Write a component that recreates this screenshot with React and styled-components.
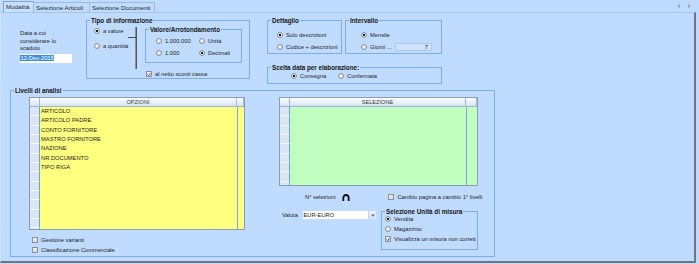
import React from 'react'
import styled, { createGlobalStyle } from 'styled-components'

const Global = createGlobalStyle`
  html, body {
    margin: 0;
    padding: 0;
    background: #bfdbff;
  }
  body {
    font-family: "Liberation Sans", Arial, sans-serif;
    font-size: 5.75px;
    color: #1e1e1e;
  }
  * { box-sizing: border-box; }
`

const Window = styled.div`
  width: 699px;
  height: 264px;
  overflow: hidden;
  background: #bfdbff;
  display: flex;
  flex-direction: column;
`

const TabStrip = styled.div`
  height: 12px;
  display: flex;
  align-items: flex-end;
  padding-left: 3px;
`

const Tab = styled.div`
  width: ${p => p.$w}px;
  height: ${p => (p.$active ? 11 : 10)}px;
  border: 1px solid ${p => (p.$active ? '#7fa3d4' : '#9dbbe2')};
  border-bottom: none;
  margin-right: -1px;
  padding-left: 2px;
  font-size: 6.2px;
  line-height: ${p => (p.$active ? 10 : 9)}px;
  color: #2a2a2a;
  background: ${p => (p.$active ? '#c6e0ff' : '#bfdbff')};
  white-space: nowrap;
`

const Scroller = styled.svg`
  margin-left: auto;
  margin-right: 7px;
  align-self: center;
`

const Panel = styled.div`
  width: 696px;
  height: 251px;
  border-top: 1px solid #a4c4ee;
  border-left: 1px solid #cfe3ff;
  border-right: 2px solid #6f7680;
  border-bottom: 2px solid #6f7680;
`

const TopRow = styled.div`
  display: flex;
  align-items: flex-start;
  height: 71px;
  padding-top: 4px;
`

const DateBlock = styled.div`
  width: 66px;
  margin-left: 19px;
  padding-top: 13px;
  line-height: 7.5px;
`

const DateInput = styled.div`
  width: 52px;
  height: 9px;
  margin-top: 1px;
  background: #fff;
  line-height: 9px;
  white-space: nowrap;
`

const Selected = styled.span`
  background: #3d8de0;
  color: #fff;
  padding: 0 0.5px;
`

const Group = styled.fieldset`
  margin: 0 0 0 ${p => p.$ml || 0}px;
  padding: 0;
  min-width: 0;
  width: ${p => p.$w}px;
  height: ${p => p.$h}px;
  border: 1px solid #7eacee;
  flex: none;
`

const Legend = styled.legend`
  margin-left: 3px;
  padding: 0 1px;
  font-weight: bold;
  font-size: 6.3px;
  line-height: 7px;
  color: #151515;
  white-space: nowrap;
`

const Col = styled.div`
  display: flex;
  flex-direction: column;
  gap: ${p => p.$gap || 0}px;
  padding: ${p => p.$pad || '0'};
  overflow: ${p => (p.$clip ? 'hidden' : 'visible')};
`

const Row = styled.div`
  display: flex;
  align-items: flex-start;
  gap: ${p => p.$gap || 0}px;
  padding: ${p => p.$pad || '0'};
`

const Option = styled.div`
  display: flex;
  align-items: center;
  gap: 3px;
  height: 8px;
  width: ${p => (p.$w ? `${p.$w}px` : 'auto')};
  white-space: nowrap;
  flex: none;
`

const Radio = styled.span`
  width: 6px;
  height: 6px;
  border-radius: 50%;
  border: 1px solid #8d9096;
  flex: none;
  background: ${p =>
    p.$on
      ? 'radial-gradient(circle, #1b1b1b 0 1.2px, #f6f6f6 1.6px, #d6d6d6 100%)'
      : 'radial-gradient(circle at 40% 35%, #f8f8f8, #d2d4d8)'};
`

const Box = styled.span`
  width: 6px;
  height: 6px;
  border: 1px solid #8d9096;
  background: linear-gradient(135deg, #f6f6f6, #d4d6da);
  flex: none;
  display: flex;
  align-items: center;
  justify-content: center;
`

const TipoGrid = styled.div`
  display: grid;
  grid-template-columns: 43px auto;
  row-gap: 4px;
  padding: 4px 0 0 10px;
`

const NumBox = styled.div`
  width: 37px;
  height: 8px;
  background: #cfe2fa;
  border: 1px solid #afc9ea;
  text-align: right;
  padding-right: 3px;
  line-height: 6px;
`

const LivelliBody = styled.div`
  display: grid;
  grid-template-columns: 216px 199px;
  column-gap: 34px;
  padding: 3px 0 0 18px;
`

const DataGrid = styled.div`
  height: ${p => p.$h}px;
  border: 1px solid #8c9cb4;
  background: ${p => p.$fill};
  display: flex;
  flex-direction: column;
  overflow: hidden;
`

const GridLine = styled.div`
  display: grid;
  grid-template-columns: 10px 1fr ${p => p.$extra}px;
  height: ${p => (p.$head ? 9 : 9.35)}px;
  flex: none;
  background: ${p => (p.$head ? 'linear-gradient(#fdfeff, #d7e2f1)' : 'transparent')};
  border-bottom: ${p => (p.$head ? '1px solid #9eb4d4' : 'none')};
`

const HeadCell = styled.div`
  border-right: 1px solid #a7bad6;
  text-align: center;
  line-height: 8px;
  font-size: 5.6px;
  color: #3a3a3a;
`

const RowHead = styled.div`
  background: #dbe6f4;
  border-bottom: 1px solid #f2f7fd;
  border-right: 1px solid #6c9ee2;
`

const Cell = styled.div`
  padding-left: 1px;
  line-height: 9px;
  white-space: nowrap;
  overflow: hidden;
`

const EndCell = styled.div`
  border-left: 1px solid #79a6e6;
`

const Checks = styled.div`
  display: flex;
  flex-direction: column;
  gap: 2px;
  margin: 6px 0 0 3px;
`

const InfoRow = styled.div`
  display: flex;
  align-items: center;
  height: 8px;
  margin-top: 7px;
  padding-left: 26px;
  white-space: nowrap;
`

const Arch = styled.svg`
  display: block;
  flex: none;
  margin: 0 38px 0 7px;
`

const ValutaRow = styled.div`
  display: flex;
  align-items: flex-start;
  margin-top: 7px;
  padding-left: 3px;
`

const Label = styled.div`
  width: ${p => p.$w}px;
  margin-top: 3px;
  line-height: 8px;
`

const Combo = styled.div`
  width: 73px;
  height: 8px;
  margin-top: 3px;
  background: #fff;
  display: flex;
`

const ComboText = styled.div`
  flex: 1;
  line-height: 8px;
  padding-left: 0.5px;
`

const ComboBtn = styled.div`
  width: 8px;
  background: linear-gradient(#eef3fa, #d6e0ee);
  border-left: 1px solid #c4cfdf;
  display: flex;
  align-items: center;
  justify-content: center;
`

const Tick = () => (
  <svg width="5" height="5" viewBox="0 0 5 5">
    <path d="M0.6 2.6 L2 4 L4.4 0.8" stroke="#333" strokeWidth="0.9" fill="none" />
  </svg>
)

const Opt = ({ type = 'radio', on, w, children }) => (
  <Option $w={w}>
    {type === 'radio' ? <Radio $on={on} /> : <Box>{on && <Tick />}</Box>}
    <span>{children}</span>
  </Option>
)

const Grid = ({ title, h, extra, fill, items, rows }) => (
  <DataGrid $h={h} $fill={fill}>
    <GridLine $head $extra={extra}>
      <HeadCell />
      <HeadCell>{title}</HeadCell>
      <HeadCell />
    </GridLine>
    {Array.from({ length: rows }).map((_, i) => (
      <GridLine key={i} $extra={extra}>
        <RowHead />
        <Cell>{items[i] || ''}</Cell>
        <EndCell />
      </GridLine>
    ))}
  </DataGrid>
)

const opzioni = [
  'ARTICOLO',
  'ARTICOLO PADRE',
  'CONTO FORNITORE',
  'MASTRO FORNITORE',
  'NAZIONE',
  'NR.DOCUMENTO',
  'TIPO RIGA',
]

export default function App() {
  return (
    <Window>
      <Global />
      <TabStrip>
        <Tab $w={31} $active>Modalità</Tab>
        <Tab $w={57}>Selezione Articoli</Tab>
        <Tab $w={66}>Selezione Documenti</Tab>
        <Scroller width="16" height="6" viewBox="0 0 16 6">
          <path d="M4 0.5 L1 3 L4 5.5 Z" fill="#a3adbb" />
          <path d="M12 0.5 L15 3 L12 5.5 Z" fill="#a3adbb" />
        </Scroller>
      </TabStrip>

      <Panel>
        <TopRow>
          <DateBlock>
            Data a cui<br />considerare lo<br />scaduto
            <DateInput><Selected>12-Dec-2015</Selected></DateInput>
          </DateBlock>

          <Group $w={164} $h={62}>
            <Legend>Tipo di informazione</Legend>
            <Row $pad="0 6px 0 7px">
              <Col $gap={7} $pad="3px 0 0 0" style={{ width: 34 }}>
                <Opt on>a valore</Opt>
                <Opt>a quantità</Opt>
              </Col>
              <svg width="9" height="45" viewBox="0 0 9 45">
                <path d="M0 13.5 H8" stroke="#4a4a4a" strokeWidth="1" />
                <path d="M8.2 3 V45" stroke="#4a4a4a" strokeWidth="1.4" />
              </svg>
              <Col $pad="2px 0 0 8px">
                <Group $w={97} $h={37}>
                  <Legend>Valore/Arrotondamento</Legend>
                  <TipoGrid>
                    <Opt>1.000.000</Opt>
                    <Opt>Unità</Opt>
                    <Opt>1.000</Opt>
                    <Opt on>Decimali</Opt>
                  </TipoGrid>
                </Group>
                <Col $pad="7px 0 0 1px">
                  <Opt type="check" on>al netto sconti cassa</Opt>
                </Col>
              </Col>
            </Row>
          </Group>

          <Col $pad="0 0 0 17px">
            <Row $gap={3}>
              <Group $w={75} $h={37}>
                <Legend>Dettaglio</Legend>
                <Col $clip $gap={4} $pad="7px 2px 0 9px">
                  <Opt on>Solo descrizioni</Opt>
                  <Opt>Codice + descrizioni</Opt>
                </Col>
              </Group>
              <Group $w={97} $h={37}>
                <Legend>Intervallo</Legend>
                <Col $gap={4} $pad="7px 0 0 15px">
                  <Opt on>Mensile</Opt>
                  <Row>
                    <Opt w={34}>Giorni ...</Opt>
                    <NumBox>7</NumBox>
                  </Row>
                </Col>
              </Group>
            </Row>
            <Col $pad="10px 0 0 0">
              <Group $w={175} $h={20}>
                <Legend>Scelta data per elaborazione:</Legend>
                <Row $pad="1px 0 0 23px">
                  <Opt on w={47}>Consegna</Opt>
                  <Opt>Confermata</Opt>
                </Row>
              </Group>
            </Col>
          </Col>
        </TopRow>

        <Group $w={485} $h={170} $ml={9} style={{ marginTop: 3 }}>
          <Legend>Livelli di analisi</Legend>
          <LivelliBody>
            <div>
              <Grid title="OPZIONI" h={133} extra={7} fill="#ffff80" items={opzioni} rows={14} />
              <Checks>
                <Opt type="check">Gestione varianti</Opt>
                <Opt type="check">Classificazione Commerciale</Opt>
              </Checks>
            </div>
            <div>
              <Grid title="SELEZIONE" h={89} extra={11} fill="#c0ffc0" items={[]} rows={9} />
              <InfoRow>
                <span>N° selezioni</span>
                <Arch width="8" height="7" viewBox="0 0 8 7">
                  <path d="M1.3 7 V4.2 Q1.3 1 4 1 Q6.7 1 6.7 4.2 V7" stroke="#111" strokeWidth="1.8" fill="none" />
                </Arch>
                <Opt type="check">Cambio pagina a cambio 1° livelli</Opt>
              </InfoRow>
              <ValutaRow>
                <Label $w={21}>Valuta</Label>
                <Combo>
                  <ComboText>EUR-EURO</ComboText>
                  <ComboBtn>
                    <svg width="4" height="3" viewBox="0 0 4 3">
                      <path d="M0 0.5 H4 L2 2.8 Z" fill="#667" />
                    </svg>
                  </ComboBtn>
                </Combo>
                <Group $w={97} $h={42} $ml={5}>
                  <Legend>Selezione Unità di misura</Legend>
                  <Col $gap={2} $pad="0 0 0 3px">
                    <Opt on>Vendita</Opt>
                    <Opt>Magazzino</Opt>
                    <Opt type="check" on>Visualizza un misura non corrett</Opt>
                  </Col>
                </Group>
              </ValutaRow>
            </div>
          </LivelliBody>
        </Group>
      </Panel>
    </Window>
  )
}
